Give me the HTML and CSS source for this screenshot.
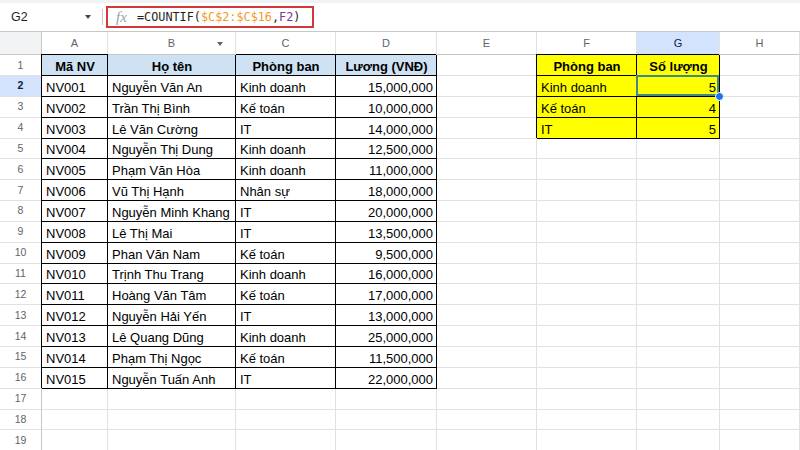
FILE: index.html
```html
<!DOCTYPE html>
<html lang="vi">
<head>
<meta charset="utf-8">
<title>Sheet</title>
<link rel="stylesheet" href="styles.css">
</head>
<body>
<div class="app">
  <div class="topstrip"></div>
  <div class="fbar">
    <div class="namebox"><span class="ref">G2</span><span class="caret"></span></div>
    <div class="vsep"></div>
    <div class="formula">
      <span class="fx">fx</span>
      <span class="ftext">=COUNTIF(<span class="r1">$C$2:$C$16</span>,<span class="r2">F2</span>)</span>
    </div>
  </div>
  <div class="sheet">
    <div class="c corner"></div>
    <div class="c ch">A</div>
    <div class="c ch chmenu">B</div>
    <div class="c ch">C</div>
    <div class="c ch">D</div>
    <div class="c ch">E</div>
    <div class="c ch">F</div>
    <div class="c ch act">G</div>
    <div class="c ch">H</div>

    <div class="c rh">1</div>
    <div class="c t b hd">Mã NV</div>
    <div class="c t b hd">Họ tên</div>
    <div class="c t b hd">Phòng ban</div>
    <div class="c t b hd">Lương (VNĐ)</div>
    <div class="c"></div>
    <div class="c t b y">Phòng ban</div>
    <div class="c t b y">Số lượng</div>
    <div class="c"></div>

    <div class="c rh act actrow">2</div>
    <div class="c t">NV001</div>
    <div class="c t">Nguyễn Văn An</div>
    <div class="c t">Kinh doanh</div>
    <div class="c t num">15,000,000</div>
    <div class="c"></div>
    <div class="c t y">Kinh doanh</div>
    <div class="c t y num sel">5</div>
    <div class="c"></div>

    <div class="c rh">3</div>
    <div class="c t">NV002</div>
    <div class="c t">Trần Thị Bình</div>
    <div class="c t">Kế toán</div>
    <div class="c t num">10,000,000</div>
    <div class="c"></div>
    <div class="c t y">Kế toán</div>
    <div class="c t y num">4</div>
    <div class="c"></div>

    <div class="c rh">4</div>
    <div class="c t">NV003</div>
    <div class="c t">Lê Văn Cường</div>
    <div class="c t">IT</div>
    <div class="c t num">14,000,000</div>
    <div class="c"></div>
    <div class="c t y">IT</div>
    <div class="c t y num">5</div>
    <div class="c"></div>

    <div class="c rh">5</div>
    <div class="c t">NV004</div>
    <div class="c t">Nguyễn Thị Dung</div>
    <div class="c t">Kinh doanh</div>
    <div class="c t num">12,500,000</div>
    <div class="c"></div><div class="c"></div><div class="c"></div><div class="c"></div>

    <div class="c rh">6</div>
    <div class="c t">NV005</div>
    <div class="c t">Phạm Văn Hòa</div>
    <div class="c t">Kinh doanh</div>
    <div class="c t num">11,000,000</div>
    <div class="c"></div><div class="c"></div><div class="c"></div><div class="c"></div>

    <div class="c rh">7</div>
    <div class="c t">NV006</div>
    <div class="c t">Vũ Thị Hạnh</div>
    <div class="c t">Nhân sự</div>
    <div class="c t num">18,000,000</div>
    <div class="c"></div><div class="c"></div><div class="c"></div><div class="c"></div>

    <div class="c rh">8</div>
    <div class="c t">NV007</div>
    <div class="c t">Nguyễn Minh Khang</div>
    <div class="c t">IT</div>
    <div class="c t num">20,000,000</div>
    <div class="c"></div><div class="c"></div><div class="c"></div><div class="c"></div>

    <div class="c rh">9</div>
    <div class="c t">NV008</div>
    <div class="c t">Lê Thị Mai</div>
    <div class="c t">IT</div>
    <div class="c t num">13,500,000</div>
    <div class="c"></div><div class="c"></div><div class="c"></div><div class="c"></div>

    <div class="c rh">10</div>
    <div class="c t">NV009</div>
    <div class="c t">Phan Văn Nam</div>
    <div class="c t">Kế toán</div>
    <div class="c t num">9,500,000</div>
    <div class="c"></div><div class="c"></div><div class="c"></div><div class="c"></div>

    <div class="c rh">11</div>
    <div class="c t">NV010</div>
    <div class="c t">Trịnh Thu Trang</div>
    <div class="c t">Kinh doanh</div>
    <div class="c t num">16,000,000</div>
    <div class="c"></div><div class="c"></div><div class="c"></div><div class="c"></div>

    <div class="c rh">12</div>
    <div class="c t">NV011</div>
    <div class="c t">Hoàng Văn Tâm</div>
    <div class="c t">Kế toán</div>
    <div class="c t num">17,000,000</div>
    <div class="c"></div><div class="c"></div><div class="c"></div><div class="c"></div>

    <div class="c rh">13</div>
    <div class="c t">NV012</div>
    <div class="c t">Nguyễn Hải Yến</div>
    <div class="c t">IT</div>
    <div class="c t num">13,000,000</div>
    <div class="c"></div><div class="c"></div><div class="c"></div><div class="c"></div>

    <div class="c rh">14</div>
    <div class="c t">NV013</div>
    <div class="c t">Lê Quang Dũng</div>
    <div class="c t">Kinh doanh</div>
    <div class="c t num">25,000,000</div>
    <div class="c"></div><div class="c"></div><div class="c"></div><div class="c"></div>

    <div class="c rh">15</div>
    <div class="c t">NV014</div>
    <div class="c t">Phạm Thị Ngọc</div>
    <div class="c t">Kế toán</div>
    <div class="c t num">11,500,000</div>
    <div class="c"></div><div class="c"></div><div class="c"></div><div class="c"></div>

    <div class="c rh">16</div>
    <div class="c t">NV015</div>
    <div class="c t">Nguyễn Tuấn Anh</div>
    <div class="c t">IT</div>
    <div class="c t num">22,000,000</div>
    <div class="c"></div><div class="c"></div><div class="c"></div><div class="c"></div>

    <div class="c rh">17</div>
    <div class="c"></div><div class="c"></div><div class="c"></div><div class="c"></div>
    <div class="c"></div><div class="c"></div><div class="c"></div><div class="c"></div>

    <div class="c rh">18</div>
    <div class="c"></div><div class="c"></div><div class="c"></div><div class="c"></div>
    <div class="c"></div><div class="c"></div><div class="c"></div><div class="c"></div>

    <div class="c rh">19</div>
    <div class="c"></div><div class="c"></div><div class="c"></div><div class="c"></div>
    <div class="c"></div><div class="c"></div><div class="c"></div><div class="c"></div>
  </div>
</div>
</body>
</html>
```
FILE: styles.css
```css
html, body {
  margin: 0;
  padding: 0;
  background: #ffffff;
}
body {
  font-family: "Liberation Sans", Arial, sans-serif;
  overflow: hidden;
}
.app {
  width: 800px;
  height: 450px;
  overflow: hidden;
}
.topstrip {
  height: 3px;
  background: #f1f3f4;
}
.fbar {
  height: 28px;
  display: flex;
  align-items: center;
  border-bottom: 1px solid #c4c7c5;
}
.namebox {
  width: 102px;
  box-sizing: border-box;
  padding: 0 11px 0 11px;
  display: flex;
  align-items: center;
  justify-content: space-between;
}
.ref {
  font-size: 12.5px;
  color: #1f1f1f;
}
.caret {
  width: 0;
  height: 0;
  border-left: 3.5px solid transparent;
  border-right: 3.5px solid transparent;
  border-top: 4px solid #444746;
}
.vsep {
  width: 1px;
  height: 16px;
  background: #c4c7c5;
}
.formula {
  margin-left: 3px;
  width: 208px;
  height: 22px;
  box-sizing: border-box;
  border: 2px solid #d0383a;
  display: flex;
  align-items: center;
  padding-left: 8px;
}
.fx {
  font-family: "Liberation Serif", "DejaVu Serif", serif;
  font-style: italic;
  font-size: 15px;
  color: #9aa0a6;
  width: 21px;
}
.ftext {
  font-family: "DejaVu Sans Mono", "Liberation Mono", monospace;
  font-size: 11.8px;
  color: #1f1f1f;
  white-space: nowrap;
}
.r1 { color: #f29b26; }
.r2 { color: #7e3794; }

.sheet {
  display: grid;
  grid-template-columns: 42px 66px 128px 100px 101px 100px 100px 83px 1fr;
  grid-template-rows: 23px 21px repeat(18, 20.85px);
  width: 800px;
}
.c {
  box-sizing: border-box;
  border-right: 1px solid #e1e1e1;
  border-bottom: 1px solid #e1e1e1;
  display: flex;
  align-items: flex-end;
  padding: 0 3px 1px 4px;
  font-size: 13px;
  line-height: 15px;
  white-space: nowrap;
  color: #000000;
}
.corner {
  background: #f1f3f4;
  border-right-color: #c4c7c5;
  border-bottom-color: #c4c7c5;
}
.ch {
  justify-content: center;
  align-items: center;
  padding: 0;
  font-size: 11px;
  color: #5f6368;
  border-bottom-color: #c4c7c5;
}
.chmenu {
  position: relative;
}
.chmenu::after {
  content: "";
  position: absolute;
  right: 12px;
  top: 10px;
  border-left: 3.5px solid transparent;
  border-right: 3.5px solid transparent;
  border-top: 4px solid #5f6368;
}
.rh {
  justify-content: center;
  align-items: center;
  padding: 0;
  font-size: 10.5px;
  color: #5f6368;
  border-right-color: #c4c7c5;
}
.act {
  background: #d3e3fd;
  color: #041e49;
}
.actrow {
  font-weight: bold;
}
.t {
  border-right-color: #000000;
  border-bottom-color: #000000;
  box-shadow: -1px -1px 0 #000000;
}
.b {
  font-weight: bold;
  justify-content: center;
}
.hd {
  background: #cfe2f3;
}
.y {
  background: #ffff00;
}
.num {
  justify-content: flex-end;
}
.sel {
  position: relative;
}
.sel::after {
  content: "";
  position: absolute;
  left: -1px;
  top: -1px;
  right: 0;
  bottom: 0;
  border: 2px solid #3f8a8f;
}
.sel::before {
  content: "";
  position: absolute;
  right: -5px;
  bottom: -5px;
  width: 7px;
  height: 7px;
  border-radius: 50%;
  background: #1a73e8;
  border: 1px solid #ffffff;
  z-index: 2;
}
```
